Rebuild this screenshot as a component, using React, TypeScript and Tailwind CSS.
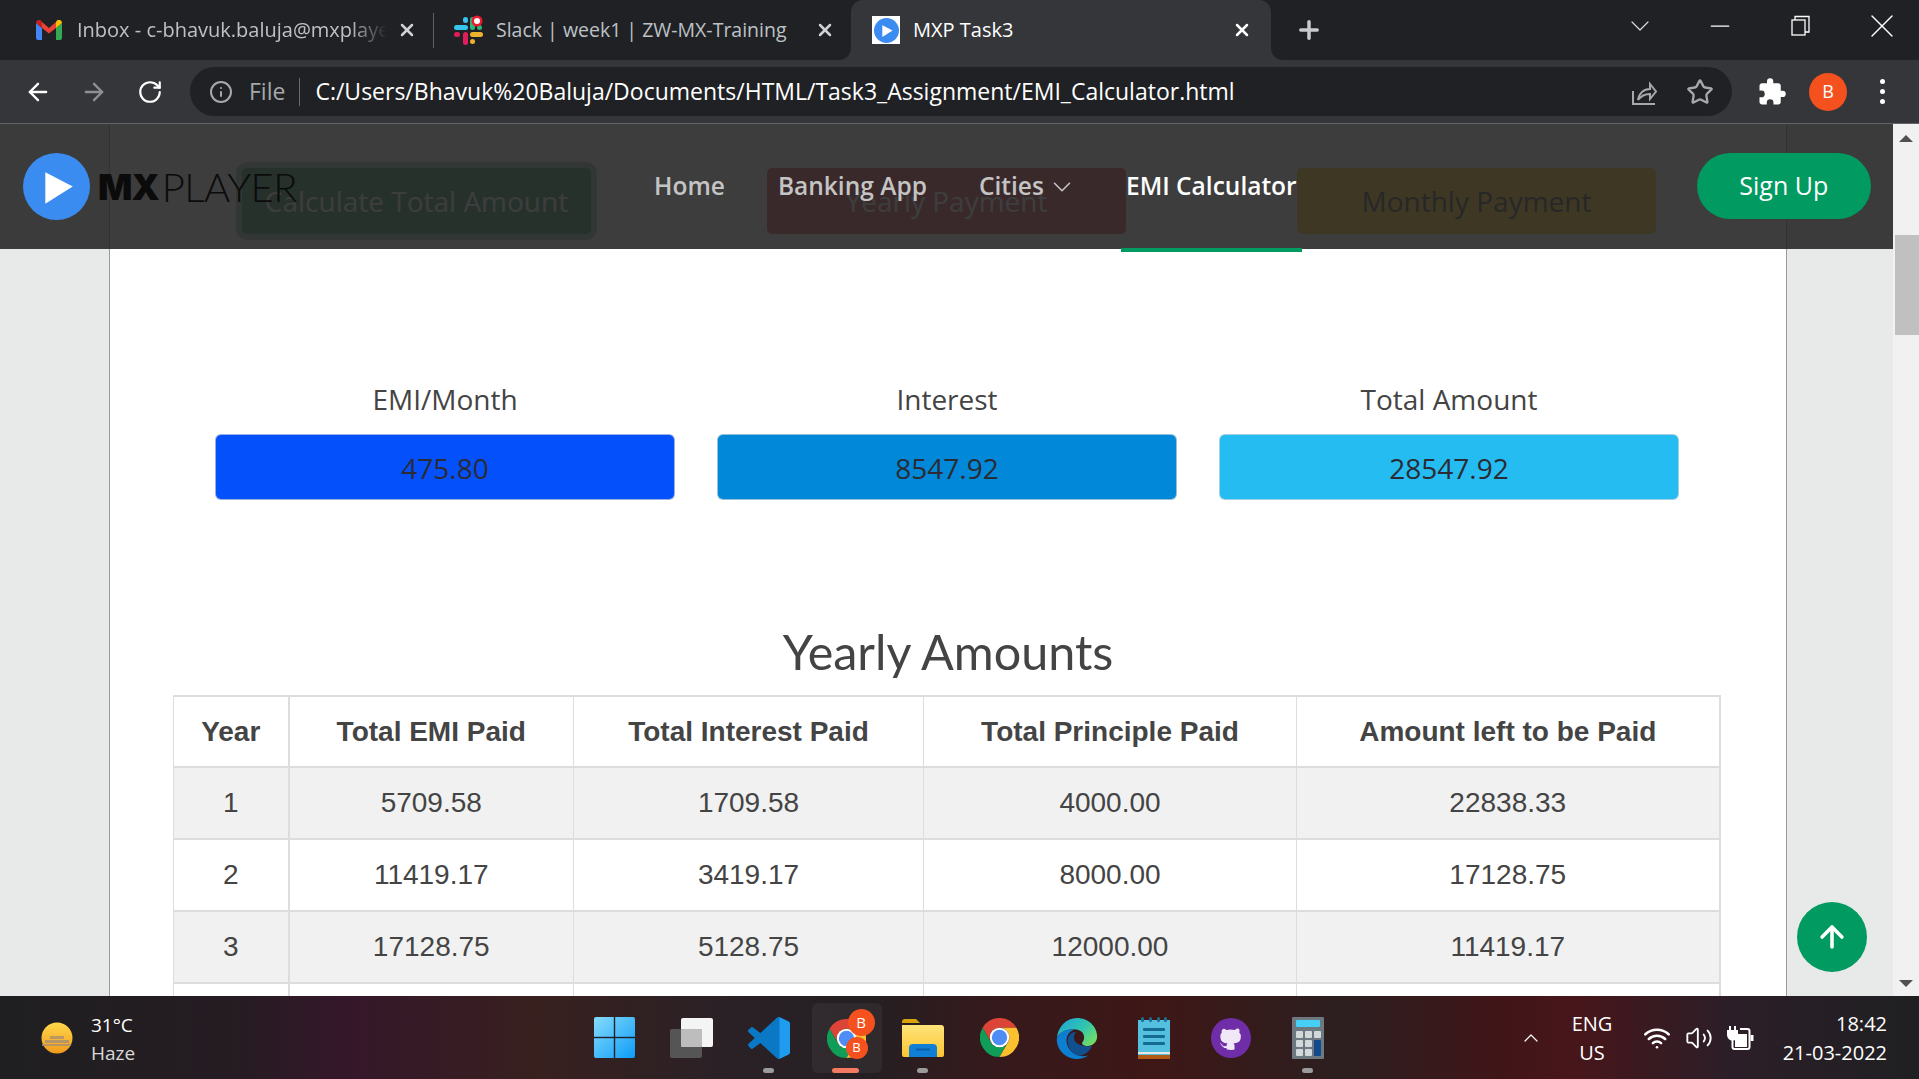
import React from "react";
import { ArrowLeft, ArrowRight, RotateCw, Info, Star, X, Plus, ChevronDown, ChevronUp, Minus, Wifi, Volume2, ArrowUp } from "lucide-react";
import { FaGithub } from "react-icons/fa";

function GmailIcon() {
  return (
    <svg width="26" height="20" viewBox="0 0 26 20">
      <path d="M0 3v15a2 2 0 0 0 2 2h4V8Z" fill="#4285f4" />
      <path d="M26 3v15a2 2 0 0 1-2 2h-4V8Z" fill="#34a853" />
      <path d="M6 8v-6L13 8l7-6v6l-7 5.500Z" fill="#ea4335" />
      <path d="M0 3c0-3 3.500-4 5-2.500L6 2v6L0 3Z" fill="#c5221f" />
      <path d="M26 3c0-3-3.500-4-5-2.500L20 2v6l6-5Z" fill="#fbbc04" />
    </svg>
  );
}

function SlackIcon() {
  return (
    <svg width="30" height="30" viewBox="0 0 30 30">
      <rect x="1" y="10" width="14" height="5" rx="2.500" fill="#36c5f0" />
      <rect x="10" y="2" width="5" height="6" rx="2.500" fill="#36c5f0" />
      <rect x="17" y="2" width="5" height="13" rx="2.500" fill="#2eb67d" />
      <rect x="24" y="10" width="5" height="5" rx="2.500" fill="#2eb67d" />
      <rect x="17" y="17" width="13" height="5" rx="2.500" fill="#ecb22e" />
      <rect x="17" y="24" width="5" height="5" rx="2.500" fill="#ecb22e" />
      <rect x="10" y="17" width="5" height="13" rx="2.500" fill="#e01e5a" />
      <rect x="1" y="17" width="6" height="5" rx="2.500" fill="#e01e5a" />
      <circle cx="24" cy="6" r="5.500" fill="#ea1c2c" />
      <circle cx="24" cy="6" r="3" fill="#fff" />
    </svg>
  );
}

function PlayDisc({ size, bg }: { size: number; bg: string }) {
  return (
    <svg width={size} height={size} viewBox="0 0 66 66">
      <circle cx="33" cy="33" r="33" fill={bg} />
      <path d="M22 19 L49 33 L22 50 Z" fill="#fff" />
    </svg>
  );
}

function ChromeIcon({ size }: { size: number }) {
  return (
    <svg width={size} height={size} viewBox="0 0 48 48">
      <path d="M3.200 12A24 24 0 0 1 44.800 12H24A12 12 0 0 0 13.600 30Z" fill="#db4437" />
      <path d="M3.200 12A24 24 0 0 0 24 48L34.400 30A12 12 0 0 1 13.600 30Z" fill="#0f9d58" />
      <path d="M44.800 12A24 24 0 0 1 24 48L34.400 30A12 12 0 0 0 24 12Z" fill="#fbc02d" />
      <circle cx="24" cy="24" r="12" fill="#fff" />
      <circle cx="24" cy="24" r="9.500" fill="#4e8df5" />
    </svg>
  );
}

function WindowsIcon() {
  return (
    <svg width="41" height="41" viewBox="0 0 41 41">
      <defs>
        <linearGradient id="winG" x1="0" y1="0" x2="1" y2="1">
          <stop offset="0" stopColor="#86dcfb" />
          <stop offset="1" stopColor="#0d9cf8" />
        </linearGradient>
      </defs>
      <rect x="0" y="0" width="41" height="41" rx="2" fill="url(#winG)" />
      <rect x="19.800" y="0" width="1.400" height="41" fill="#20202a" />
      <rect x="0" y="19.800" width="41" height="1.400" fill="#20202a" />
    </svg>
  );
}

function TaskViewIcon() {
  return (
    <svg width="44" height="40" viewBox="0 0 44 40">
      <rect x="11" y="0" width="32" height="29" rx="2" fill="#f4f4f4" />
      <rect x="0" y="11" width="32" height="29" rx="2" fill="#555" />
      <rect x="11" y="11" width="21" height="18" rx="1" fill="#bdbdbd" />
    </svg>
  );
}

function VSCodeIcon() {
  return (
    <svg width="42" height="42" viewBox="0 0 100 100">
      <path d="M70.900 99.300a6.200 6.200 0 0 0 4.960-.19l20.590-9.900a6.250 6.250 0 0 0 3.540-5.630V16.400a6.250 6.250 0 0 0-3.540-5.630L75.860.87a6.230 6.230 0 0 0-7.100 1.210L29.350 38.040 12.180 25a4.160 4.160 0 0 0-5.320.24l-5.500 5a4.170 4.170 0 0 0 0 6.160L16.240 50 1.350 63.600a4.170 4.170 0 0 0 0 6.160l5.500 5a4.160 4.160 0 0 0 5.320.24l17.170-13.030 39.400 35.960a6.200 6.200 0 0 0 2.140 1.370Zm4.100-72.160L45.100 50l29.900 22.860V27.140Z" fill="#0a78c4" />
      <path d="M75 .6l21.450 10.170A6.250 6.250 0 0 1 100 16.400v67.180a6.250 6.250 0 0 1-3.550 5.630L75 99.500Z" fill="#1f9cf0" />
    </svg>
  );
}

function FolderIcon() {
  return (
    <svg width="42" height="38" viewBox="0 0 42 38">
      <defs>
        <linearGradient id="fold" x1="0" y1="0" x2="0" y2="1">
          <stop offset="0" stopColor="#ffe37a" />
          <stop offset="1" stopColor="#fbc52f" />
        </linearGradient>
      </defs>
      <path d="M0 3a3 3 0 0 1 3-3h11l4 4h-18Z" fill="#d9a30b" />
      <path d="M0 6h39a3 3 0 0 1 3 3v27a2 2 0 0 1-2 2H2a2 2 0 0 1-2-2Z" fill="url(#fold)" />
      <path d="M7 38V29a4 4 0 0 1 4-4h20a4 4 0 0 1 4 4v9Z" fill="#0f7fd6" />
      <rect x="14" y="29.500" width="14" height="2" fill="#0a5fa8" />
    </svg>
  );
}

function EdgeIcon() {
  return (
    <svg width="42" height="42" viewBox="0 0 48 48">
      <defs>
        <linearGradient id="edgeTop" x1="0" y1="0" x2="1" y2="0.700">
          <stop offset="0" stopColor="#1ba1d8" />
          <stop offset="0.600" stopColor="#30c5b0" />
          <stop offset="1" stopColor="#6fdc6a" />
        </linearGradient>
      </defs>
      <path d="M1 24C2 11 12 1 24 1c13 0 23 10 23 21 0 7-5 11-11 11-4 0-7-2-6-4 4-4 3-14-8-15C12 13 3 18 1 24Z" fill="url(#edgeTop)" />
      <path d="M1 24C3 18 12 13 22 14c-8 2-12 10-9 18 3 9 13 15 24 12-4 2.500-8 4-13 4C11 48 0 37 1 24Z" fill="#0c7fd0" />
      <path d="M14 32c-3-8 2-15 9-15-4 4-3 10 1 13 4 3 10 4 17 3-3 7-9 11-15 11-6 0-10-6-12-12Z" fill="#11508f" />
    </svg>
  );
}

function NotepadIcon() {
  return (
    <svg width="32" height="42" viewBox="0 0 32 42">
      <rect x="0" y="3" width="32" height="35" fill="#55bfe0" />
      <rect x="0" y="35" width="32" height="2" fill="#e6e6e6" />
      <rect x="0" y="38" width="32" height="4" fill="#b25a14" />
      <rect x="3" y="0" width="3" height="5" rx="1.500" fill="#1a6f96" />
      <rect x="11" y="0" width="3" height="5" rx="1.500" fill="#1a6f96" />
      <rect x="19" y="0" width="3" height="5" rx="1.500" fill="#1a6f96" />
      <rect x="26" y="0" width="3" height="5" rx="1.500" fill="#1a6f96" />
      <rect x="5" y="11" width="22" height="3" rx="1" fill="#136b91" />
      <rect x="5" y="18" width="22" height="3" rx="1" fill="#136b91" />
      <rect x="5" y="25" width="22" height="3" rx="1" fill="#136b91" />
    </svg>
  );
}

function CalcIcon() {
  const keys = [
    [4, 14], [13, 14], [22, 14],
    [4, 23], [13, 23], [4, 32], [13, 32],
  ];
  return (
    <svg width="32" height="42" viewBox="0 0 32 42">
      <rect x="0" y="0" width="32" height="42" rx="1" fill="#6d7880" />
      <rect x="4" y="3" width="24" height="7" rx="1" fill="#46d0f5" />
      {keys.map(([x, y]) => (
        <rect key={`${x}-${y}`} x={x} y={y} width="7" height="7" rx="1" fill="#d3d8db" />
      ))}
      <rect x="22" y="23" width="7" height="16" rx="1" fill="#124a8f" />
    </svg>
  );
}

function WeatherIcon() {
  return (
    <svg width="32" height="32" viewBox="0 0 32 32">
      <defs>
        <linearGradient id="sun" x1="0" y1="0" x2="0" y2="1">
          <stop offset="0" stopColor="#ffd84a" />
          <stop offset="1" stopColor="#f09a1c" />
        </linearGradient>
      </defs>
      <circle cx="16" cy="16" r="15.500" fill="url(#sun)" />
      <path d="M4 18h24v3H4ZM1 22h29v2H1ZM9 14h14v3H9Z" fill="#a89070" opacity="0.800" />
    </svg>
  );
}

function BatteryPlug() {
  return (
    <svg width="28" height="26" viewBox="0 0 28 26" fill="none" stroke="#fff" strokeWidth="2">
      <path d="M3 1v5M8 1v5" />
      <path d="M1 6h9v4a4.500 4.500 0 0 1-9 0Z" fill="#fff" />
      <path d="M5.500 14v8a2 2 0 0 0 2 2h13a2 2 0 0 0 2-2V6a2 2 0 0 0-2-2H13" />
      <rect x="8" y="9" width="12" height="13" fill="#fff" stroke="none" />
      <path d="M25 10v6" strokeWidth="3" />
    </svg>
  );
}

function PuzzleIcon() {
  return (
    <svg width="30" height="30" viewBox="0 0 24 24" fill="#fff">
      <path d="M20.500 11H19V7c0-1.100-.9-2-2-2h-4V3.500a2.500 2.500 0 0 0-5 0V5H4c-1.100 0-2 .9-2 2v3.800h1.500a2.700 2.700 0 0 1 0 5.400H2V20c0 1.100.9 2 2 2h3.800v-1.500a2.700 2.700 0 0 1 5.400 0V22H17c1.100 0 2-.9 2-2v-4h1.500a2.500 2.500 0 0 0 0-5z" />
    </svg>
  );
}

const slotClass = "relative flex h-[83px] w-[77px] shrink-0 items-center justify-center";

function Dot() {
  return <span className="absolute bottom-[6px] h-[5px] w-[11px] rounded-full bg-[#9b9b9b]" />;
}

const rows = [
  ["Year", "Total EMI Paid", "Total Interest Paid", "Total Principle Paid", "Amount left to be Paid"],
  ["1", "5709.58", "1709.58", "4000.00", "22838.33"],
  ["2", "11419.17", "3419.17", "8000.00", "17128.75"],
  ["3", "17128.75", "5128.75", "12000.00", "11419.17"],
];

const stats = [
  { label: "EMI/Month", value: "475.80", bg: "bg-[#0451fb]" },
  { label: "Interest", value: "8547.92", bg: "bg-[#0288d9]" },
  { label: "Total Amount", value: "28547.92", bg: "bg-[#25bcf2]" },
];

export default function App() {
  return (
    <div className="flex h-[1079px] w-[1919px] flex-col overflow-hidden bg-white font-['Open_Sans',sans-serif]">
      {/* Tab strip */}
      <div className="flex h-[60px] shrink-0 bg-[#35363a]">
        <div className="flex w-[851px] items-center rounded-br-[12px] bg-[#202124]">
          <div className="flex w-[433px] items-center pl-[36px]">
            <GmailIcon />
            <span className="ml-[15px] w-[310px] overflow-hidden whitespace-nowrap text-[20px] text-[#bdc1c6] [mask-image:linear-gradient(to_right,black_88%,transparent)]">Inbox - c-bhavuk.baluja@mxplayer.in</span>
            <X className="ml-[10px] h-[20px] w-[20px] text-[#d0d2d5]" strokeWidth={3} />
          </div>
          <div className="h-[35px] w-[1px] bg-[#5f6064]" />
          <div className="flex flex-1 items-center pl-[19px]">
            <SlackIcon />
            <span className="ml-[13px] w-[319px] whitespace-nowrap text-[19.5px] text-[#bdc1c6]">Slack | week1 | ZW-MX-Training</span>
            <X className="h-[20px] w-[20px] text-[#d0d2d5]" strokeWidth={3} />
          </div>
        </div>
        <div className="w-[420px] bg-[#202124]">
          <div className="flex h-[60px] items-center rounded-t-[12px] bg-[#35363a] pl-[21px]">
            <span className="flex h-[28px] w-[28px] items-center justify-center bg-white">
              <PlayDisc size={25} bg="#3b8cf0" />
            </span>
            <span className="ml-[13px] w-[319px] whitespace-nowrap text-[20px] text-white">MXP Task3</span>
            <X className="h-[20px] w-[20px] text-white" strokeWidth={3} />
          </div>
        </div>
        <div className="flex flex-1 items-center rounded-bl-[12px] bg-[#202124]">
          <Plus className="ml-[24px] h-[28px] w-[28px] text-[#c8cacc]" strokeWidth={3} />
          <div className="mb-[8px] flex items-center">
            <ChevronDown className="ml-[301px] h-[32px] w-[32px] text-[#d8d8d8]" strokeWidth={0.9} />
            <Minus className="ml-[49px] h-[30px] w-[30px] text-white" strokeWidth={1} />
            <svg className="ml-[55px]" width="22" height="22" viewBox="0 0 22 22" fill="none" stroke="#fff" strokeWidth="1.300">
              <rect x="2" y="5" width="13" height="15" />
              <path d="M5 5V1.500h14V17h-4" />
            </svg>
            <X className="ml-[50px] h-[40px] w-[40px] text-white" strokeWidth={0.8} />
          </div>
        </div>
      </div>

      {/* Toolbar */}
      <div className="flex h-[64px] shrink-0 items-center border-b border-[#636468] bg-[#35363a]">
        <ArrowLeft className="ml-[24px] h-[28px] w-[28px] text-white" strokeWidth={2} />
        <ArrowRight className="ml-[28px] h-[28px] w-[28px] text-[#909194]" strokeWidth={2} />
        <RotateCw className="ml-[29px] h-[26px] w-[26px] text-white" strokeWidth={2} />
        <div className="ml-[27px] flex h-[49px] w-[1542px] items-center rounded-full bg-[#202124]">
          <Info className="ml-[19px] h-[24px] w-[24px] text-[#a6a8ab]" strokeWidth={2} />
          <span className="ml-[16px] text-[23px] text-[#a6a8ab]">File</span>
          <div className="ml-[14px] h-[28px] w-[1px] bg-[#6a6b6e]" />
          <span className="ml-[15px] w-[1319px] whitespace-nowrap text-[23px] text-white">C:/Users/Bhavuk%20Baluja/Documents/HTML/Task3_Assignment/EMI_Calculator.html</span>
          <svg className="-ml-[4px]" width="28" height="28" viewBox="0 0 28 28" fill="none" stroke="#a6a8ab" strokeWidth="2">
            <path d="M3 13v13h22" />
            <path d="M8 22c1-7 6-11 12-11V6l6 7.500-6 7.500v-5c-5 0-9 2-12 6Z" />
          </svg>
          <Star className="ml-[28px] h-[28px] w-[28px] text-[#a6a8ab]" strokeWidth={2} />
        </div>
        <span className="ml-[25px]"><PuzzleIcon /></span>
        <span className="ml-[22px] flex h-[38px] w-[38px] items-center justify-center rounded-full bg-[#f4511e] text-[18px] text-white">B</span>
        <span className="ml-[33px] flex flex-col gap-[5px]">
          <span className="h-[5px] w-[5px] rounded-full bg-white" />
          <span className="h-[5px] w-[5px] rounded-full bg-white" />
          <span className="h-[5px] w-[5px] rounded-full bg-white" />
        </span>
      </div>

      {/* Browser viewport */}
      <div className="flex min-h-0 flex-1">
        <div className="relative flex w-[1893px] overflow-hidden">
          <div className="w-[109px] shrink-0 bg-[#e8eaea]" />
          <main className="w-[1678px] shrink-0 border-x border-[#9a9c9c] bg-white pt-[44px] text-[#444]">
            <div className="flex h-[66px] text-[28px]">
              <div className="ml-[132px] flex w-[349px] items-center justify-center rounded-[5px] bg-[#198754] text-white ring-[6px] ring-[#198754]/50">Calculate Total Amount</div>
              <div className="ml-[176px] flex w-[359px] items-center justify-center rounded-[5px] bg-[#dc3545] text-white">Yearly Payment</div>
              <div className="ml-[171px] flex w-[359px] items-center justify-center rounded-[5px] bg-[#ffc107] text-[#222]">Monthly Payment</div>
            </div>

            <div className="ml-[105px] mt-[147px] flex gap-[42px]">
              {stats.map((s) => (
                <div key={s.label} className="w-[460px] text-center">
                  <div className="text-[28px] leading-[36px]">{s.label}</div>
                  <div className={`mt-[17px] flex h-[66px] items-center justify-center rounded-[6px] border border-[#d8d8d8]/70 pt-[1px] text-[28px] text-[#2b2b33] ${s.bg}`}>{s.value}</div>
                </div>
              ))}
            </div>

            <h2 className="mt-[121px] text-center font-['Lato',sans-serif] text-[48.5px] leading-[60px] text-[#444]">Yearly Amounts</h2>

            <table className="ml-[63px] mt-[14px] w-[1546px] table-fixed border-collapse border-t-2 border-r-2 border-[#ddd] font-['Liberation_Sans',sans-serif] text-[28px] text-[#444]">
              <colgroup>
                <col className="w-[115px]" />
                <col className="w-[285px]" />
                <col className="w-[350px]" />
                <col className="w-[373px]" />
                <col className="w-[423px]" />
              </colgroup>
              <tbody>
                {rows.map((r, i) => (
                  <tr key={r[0]} className={`${i === 0 ? "h-[71px]" : "h-[72px]"} ${i % 2 === 1 ? "bg-[#f1f1f1]" : "bg-white"}`}>
                    {r.map((c, j) =>
                      i === 0 ? (
                        <th key={j} className={`border border-b-2 border-[#ddd] text-center font-bold ${j === 0 ? "border-r-2" : ""}`}>{c}</th>
                      ) : (
                        <td key={j} className={`border border-b-2 border-[#ddd] text-center ${j === 0 ? "border-r-2" : ""}`}>{c}</td>
                      )
                    )}
                  </tr>
                ))}
                <tr className="h-[72px]">
                  {[0, 1, 2, 3, 4].map((j) => (
                    <td key={j} className={`border border-[#ddd] ${j === 0 ? "border-r-2" : ""}`} />
                  ))}
                </tr>
              </tbody>
            </table>
          </main>
          <div className="flex-1 bg-[#e8eaea]" />

          {/* Fixed navbar over the scrolled page */}
          <nav className="absolute inset-x-0 top-0 flex h-[125px] items-center bg-[rgba(40,40,40,0.9)]">
            <div className="ml-[23px] flex items-center">
              <PlayDisc size={67} bg="#3b8cf0" />
              <span className="ml-[8px] font-['Inter',sans-serif] text-[36px] font-black tracking-[-1px] text-[#0b0b0b]">MX</span>
              <span className="ml-[3px] font-['Lato',sans-serif] text-[40px] font-light tracking-[-0.5px] text-[#0b0b0b]">PLAYER</span>
            </div>
            <a className="ml-[357px] text-[24.5px] font-semibold text-[#c4c4c4]">Home</a>
            <a className="ml-[53px] text-[24.5px] font-semibold text-[#c4c4c4]">Banking App</a>
            <a className="ml-[52px] flex items-center text-[24.5px] font-semibold text-[#c4c4c4]">
              Cities
              <ChevronDown className="ml-[3px] h-[30px] w-[30px]" strokeWidth={1.3} />
            </a>
            <a className="relative ml-[44px] flex h-full w-[181px] items-center justify-center text-[24.5px] font-semibold text-white">
              EMI Calculator
              <span className="absolute -bottom-[3px] left-0 h-[4px] w-full bg-[#019a60]" />
            </a>
            <a className="mb-[2px] ml-[395px] flex h-[66px] w-[174px] items-center justify-center rounded-full bg-[#019a60] text-[25px] text-white">Sign Up</a>
          </nav>

          {/* Back to top */}
          <button className="absolute bottom-[24px] left-[1797px] flex h-[70px] w-[70px] items-center justify-center rounded-full bg-[#019a60]">
            <ArrowUp className="h-[34px] w-[34px] text-white" strokeWidth={2.5} />
          </button>
        </div>

        {/* Scrollbar */}
        <div className="flex w-[26px] flex-col bg-[#f1f1f1]">
          <div className="flex h-[22px] items-center justify-center pt-[6px]">
            <div className="h-0 w-0 border-x-[7px] border-b-[7px] border-x-transparent border-b-[#505050]" />
          </div>
          <div className="ml-[2px] mt-[89px] h-[100px] bg-[#c0c0c0]" />
          <div className="flex-1" />
          <div className="flex h-[22px] items-center justify-center pb-[4px]">
            <div className="h-0 w-0 border-x-[7px] border-t-[7px] border-x-transparent border-t-[#505050]" />
          </div>
        </div>
      </div>

      {/* Taskbar */}
      <div className="flex h-[83px] shrink-0 items-center bg-[linear-gradient(90deg,#1f1f21_0%,#251c22_12%,#35172a_18%,#38201f_28%,#2a2126_38%,#241f22_45%,#36191c_52%,#3e1716_60%,#2c1f20_70%,#401518_78%,#47161a_82%,#2c1e28_90%,#1f2022_100%)]">
        <div className="flex w-[576px] shrink-0 items-center pl-[41px]">
          <WeatherIcon />
          <div className="ml-[18px] pt-[2px] text-[19px] leading-[28px] text-white">
            <div>31°C</div>
            <div className="text-[#d8d8d8]">Haze</div>
          </div>
        </div>
        <div className="flex shrink-0">
          <div className={slotClass}><WindowsIcon /></div>
          <div className={slotClass}><TaskViewIcon /></div>
          <div className={slotClass}><VSCodeIcon /><Dot /></div>
          <div className={slotClass}>
            <div className="absolute left-[5px] top-[7px] h-[70px] w-[70px] rounded-[6px] bg-white/5" />
            <div className="relative h-[70px] w-[70px]">
              <div className="absolute left-[16px] top-[16px]"><ChromeIcon size={39} /></div>
              <span className="absolute left-[37px] top-[6px] flex h-[27px] w-[27px] items-center justify-center rounded-full bg-[#f4511e] text-[15px] text-white">B</span>
              <span className="absolute left-[35px] top-[34px] flex h-[22px] w-[22px] items-center justify-center rounded-full bg-[#f4511e] text-[13px] text-white">B</span>
            </div>
            <span className="absolute bottom-[6px] h-[5px] w-[27px] rounded-full bg-[#f47a62]" />
          </div>
          <div className={slotClass}><FolderIcon /><Dot /></div>
          <div className={slotClass}><ChromeIcon size={39} /></div>
          <div className={slotClass}><EdgeIcon /></div>
          <div className={slotClass}><NotepadIcon /></div>
          <div className={slotClass}>
            <span className="relative flex h-[40px] w-[40px] items-center justify-center rounded-full bg-[#6f2da8]">
              <span className="absolute h-[24px] w-[24px] rounded-full bg-[#f1e8f7]" />
              <FaGithub className="relative h-[33px] w-[33px] text-[#6f2da8]" />
            </span>
          </div>
          <div className={slotClass}><CalcIcon /><Dot /></div>
        </div>
        <div className="flex flex-1 items-center text-white">
          <ChevronUp className="ml-[173px] h-[24px] w-[24px]" strokeWidth={1.2} />
          <div className="ml-[27px] w-[44px] text-center text-[20px] leading-[29px]">
            <div>ENG</div>
            <div>US</div>
          </div>
          <Wifi className="ml-[29px] h-[28px] w-[28px]" strokeWidth={2.2} />
          <Volume2 className="ml-[14px] h-[28px] w-[28px]" strokeWidth={1.6} />
          <span className="ml-[14px]"><BatteryPlug /></span>
          <div className="ml-[26px] w-[106px] text-right text-[20px] leading-[29px]">
            <div>18:42</div>
            <div className="whitespace-nowrap">21-03-2022</div>
          </div>
        </div>
      </div>
    </div>
  );
}
